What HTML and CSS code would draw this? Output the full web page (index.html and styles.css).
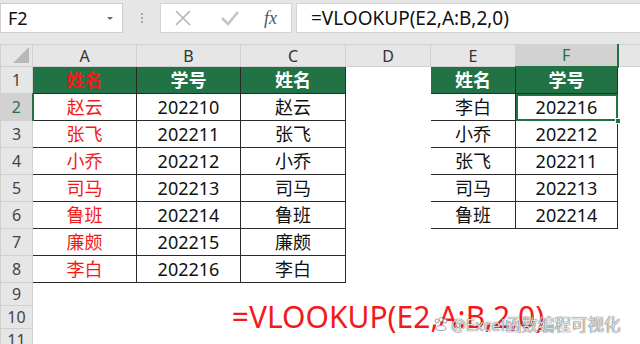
FILE: index.html
```html
<!DOCTYPE html>
<html lang="zh-CN">
<head>
  <meta charset="UTF-8" />
  <title>VLOOKUP</title>
  <link rel="stylesheet" href="styles.css">
</head>
<body>

  <div class="toolbar">
    <div class="namebox">
      <span>F2</span>
      <span class="caret"></span>
    </div>
    <div class="grip"><i></i><i></i><i></i></div>
    <div class="actions">
      <svg width="18" height="18" viewBox="0 0 18 18"><path d="M2 2 L16 16 M16 2 L2 16" stroke="#b4b4b4" stroke-width="1.6" fill="none"/></svg>
      <svg width="20" height="18" viewBox="0 0 20 18"><path d="M2 9 L8 15 L18 3" stroke="#c4c4c4" stroke-width="2.6" fill="none"/></svg>
      <span class="fx">fx</span>
    </div>
    <div class="formula">=VLOOKUP(E2,A:B,2,0)</div>
  </div>

  <table class="sheet">
    <colgroup>
      <col class="c-row"><col class="c-a"><col class="c-b"><col class="c-c"><col class="c-d"><col class="c-e"><col class="c-f"><col class="c-g">
    </colgroup>
    <tr class="heads">
      <th class="corner"><span class="tri"></span></th>
      <th>A</th><th>B</th><th>C</th><th>D</th><th>E</th><th class="sel">F</th><th></th>
    </tr>
    <tr class="tall">
      <th>1</th>
      <td class="t top red">姓名</td><td class="t top">学号</td><td class="t top">姓名</td><td></td>
      <td class="t top">姓名</td><td class="t top">学号</td><td></td>
    </tr>
    <tr class="tall">
      <th class="sel">2</th>
      <td class="t red">赵云</td><td class="t">202210</td><td class="t">赵云</td><td></td>
      <td class="t">李白</td><td class="t active">202216<span class="handle"></span></td><td></td>
    </tr>
    <tr class="tall">
      <th>3</th>
      <td class="t red">张飞</td><td class="t">202211</td><td class="t">张飞</td><td></td>
      <td class="t">小乔</td><td class="t">202212</td><td></td>
    </tr>
    <tr class="tall">
      <th>4</th>
      <td class="t red">小乔</td><td class="t">202212</td><td class="t">小乔</td><td></td>
      <td class="t">张飞</td><td class="t">202211</td><td></td>
    </tr>
    <tr class="tall">
      <th>5</th>
      <td class="t red">司马</td><td class="t">202213</td><td class="t">司马</td><td></td>
      <td class="t">司马</td><td class="t">202213</td><td></td>
    </tr>
    <tr class="tall">
      <th>6</th>
      <td class="t red">鲁班</td><td class="t">202214</td><td class="t">鲁班</td><td></td>
      <td class="t">鲁班</td><td class="t">202214</td><td></td>
    </tr>
    <tr class="tall">
      <th>7</th>
      <td class="t red">廉颇</td><td class="t">202215</td><td class="t">廉颇</td><td></td>
      <td></td><td></td><td></td>
    </tr>
    <tr class="tall">
      <th>8</th>
      <td class="t red">李白</td><td class="t">202216</td><td class="t">李白</td><td></td>
      <td></td><td></td><td></td>
    </tr>
    <tr class="short first">
      <th>9</th>
      <td></td><td></td><td></td><td></td><td></td><td></td><td></td>
    </tr>
    <tr class="short">
      <th>10</th>
      <td></td><td></td><td></td>
      <td><div class="overflow"><span class="big">=VLOOKUP(E2,A:B,2,0)</span></div></td>
      <td></td><td></td><td></td>
    </tr>
    <tr class="short">
      <th>11</th>
      <td></td><td></td><td></td><td></td><td></td><td></td><td></td>
    </tr>
  </table>

  <div class="watermark">
    <svg width="16" height="15" viewBox="0 0 16 15"><g fill="#fff" stroke="#888" stroke-width="0.8"><circle cx="4" cy="4" r="2"/><circle cx="8" cy="2.6" r="2"/><circle cx="12" cy="4" r="2"/><path d="M3 12 C3 7 13 7 13 12 C13 14 3 14 3 12 Z"/></g></svg>
    <span>@Excel函数编程可视化</span>
  </div>

</body>
</html>
```

FILE: styles.css
```css
* {
  margin: 0;
  padding: 0;
  box-sizing: border-box;
}
body {
  width: 640px;
  height: 344px;
  overflow: hidden;
  background-color: #ffffff;
  font-family: "Noto Sans", "Noto Sans CJK SC", sans-serif;
  color: #111;
  position: relative;
}
.toolbar {
  display: flex;
  align-items: center;
  height: 44px;
  padding: 2px 0 10px 0;
  background-color: #e6e6e6;
}
.namebox {
  width: 123px;
  height: 30px;
  background-color: #fff;
  border: 1px solid #cfcfcf;
  display: flex;
  align-items: center;
  justify-content: space-between;
  padding: 0 9px 0 7px;
  font-size: 18px;
}
.caret {
  width: 0;
  height: 0;
  border-left: 3px solid transparent;
  border-right: 3px solid transparent;
  border-top: 3px solid #666;
}
.grip {
  width: 37px;
  display: flex;
  flex-direction: column;
  align-items: center;
  gap: 2px;
}
.grip i {
  width: 2px;
  height: 2px;
  background-color: #aaa;
}
.actions {
  width: 132px;
  height: 30px;
  background-color: #fff;
  border: 1px solid #d4d4d4;
  display: flex;
  align-items: center;
  padding: 0 0 0 13px;
  gap: 28px;
}
.fx {
  font-family: "Liberation Serif", serif;
  font-style: italic;
  font-size: 18px;
  color: #555;
  margin-left: -4px;
}
.formula {
  flex: 1;
  height: 30px;
  margin-left: 4px;
  background-color: #fff;
  border: 1px solid #d4d4d4;
  border-right: none;
  font-size: 19px;
  line-height: 28px;
  padding-left: 14px;
}
.sheet {
  border-collapse: collapse;
  table-layout: fixed;
  width: 650px;
}
.c-row { width: 32px; }
.c-a { width: 104px; }
.c-b { width: 104px; }
.c-c { width: 105px; }
.c-d { width: 85px; }
.c-e { width: 85px; }
.c-f { width: 102px; }
.c-g { width: 33px; }
th {
  background-color: #e6e6e6;
  color: #444;
  font-weight: normal;
  font-size: 16px;
  border: 1px solid #d0d0d0;
}
.heads th {
  height: 22px;
  line-height: 20px;
  color: #333;
}
.heads th.sel {
  background-color: #d2d2d2;
  color: #217346;
  border-bottom: 2px solid #217346;
}
.corner {
  position: relative;
}
.tri {
  position: absolute;
  right: 3px;
  bottom: 3px;
  width: 0;
  height: 0;
  border-left: 16px solid transparent;
  border-bottom: 16px solid #b8b8b8;
}
tr > th.sel {
  background-color: #d2d2d2;
  color: #217346;
  border-right: 2px solid #217346;
}
td {
  border: 1px solid transparent;
  text-align: center;
  font-size: 18px;
  padding: 0;
  white-space: nowrap;
}
.tall td, .tall th {
  height: 27px;
  line-height: 25px;
}
.short td, .short th {
  height: 22px;
  line-height: 20px;
}
.short.first td, .short.first th {
  height: 23px;
}
td.t {
  border: 1px solid #2a2a2a;
}
td.top {
  background-color: #217346;
  color: #fff;
  font-weight: bold;
}
td.red {
  color: #f21a1a;
}
td.active {
  position: relative;
  outline: 2px solid #217346;
  outline-offset: -2px;
}
.handle {
  position: absolute;
  right: -4px;
  bottom: -4px;
  width: 6px;
  height: 6px;
  background-color: #217346;
  border: 1px solid #fff;
}
.overflow {
  display: flex;
  justify-content: center;
  height: 22px;
}
.big {
  color: #f21a1a;
  font-size: 30px;
  line-height: 22px;
  white-space: nowrap;
}
.watermark {
  position: absolute;
  left: 433px;
  top: 312px;
  display: flex;
  align-items: center;
  gap: 2px;
  font-size: 16.5px;
  color: rgba(255, 255, 255, 0.85);
  text-shadow: 0 0 1px rgba(0, 0, 0, 0.6), 0 0 1px rgba(0, 0, 0, 0.6);
}
```
